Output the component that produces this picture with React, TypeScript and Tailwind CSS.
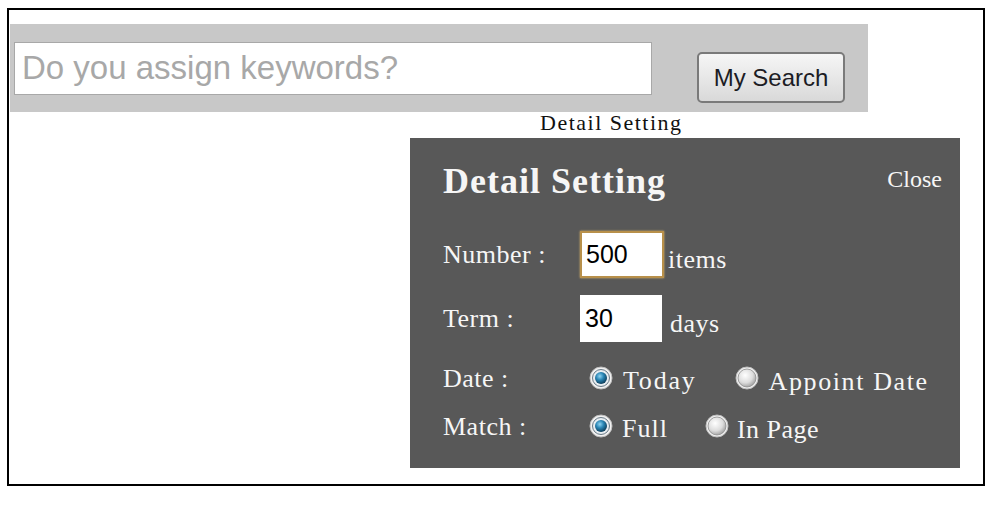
import React from "react";

function Radio({ checked }: { checked: boolean }) {
  return (
    <svg width="24" height="24" viewBox="0 0 24 24" className="shrink-0">
      <defs>
        <radialGradient id="rOff" cx="40%" cy="35%" r="70%">
          <stop offset="0%" stopColor="#ffffff" />
          <stop offset="60%" stopColor="#dcdcdc" />
          <stop offset="100%" stopColor="#9a9a9a" />
        </radialGradient>
        <radialGradient id="rOn" cx="40%" cy="35%" r="70%">
          <stop offset="0%" stopColor="#8fd3f0" />
          <stop offset="45%" stopColor="#2a86b5" />
          <stop offset="100%" stopColor="#0a3550" />
        </radialGradient>
      </defs>
      <circle cx="12" cy="12" r="11" fill="#f2f2f2" stroke="#bdbdbd" strokeWidth="1" />
      {checked ? (
        <>
          <circle cx="12" cy="12" r="8.5" fill="#e8eef2" stroke="#6a7a86" strokeWidth="1" />
          <circle cx="12" cy="12" r="6" fill="url(#rOn)" />
        </>
      ) : (
        <circle cx="12" cy="12" r="9" fill="url(#rOff)" stroke="#8a8a8a" strokeWidth="0.8" />
      )}
    </svg>
  );
}

export default function App() {
  const serif = { fontFamily: '"Liberation Serif", "Times New Roman", serif' };
  const sans = { fontFamily: '"Liberation Sans", Arial, sans-serif' };
  return (
    <div className="w-[1000px] h-[512px] bg-white overflow-hidden pt-[8px] pl-[7px]">
      <div className="w-[978px] h-[478px] border-2 border-black flex flex-col">
        {/* search bar */}
        <div className="mt-[14px] ml-[1px] w-[858px] h-[88px] bg-[#c8c8c8] flex items-center">
          <div
            className="ml-[4px] w-[638px] h-[53px] bg-white border border-[#a8a8a8] flex items-center pl-[7px] text-[33px] text-[#a8a8a8]"
            style={sans}
          >
            Do you assign keywords?
          </div>
          <button
            className="ml-[45px] mt-[19px] w-[148px] h-[51px] rounded-[5px] border-2 border-[#7a7a7a] bg-gradient-to-b from-[#f6f6f6] to-[#d9d9d9] text-[24px] text-[#1c1c24] flex items-center justify-center"
            style={sans}
          >
            My Search
          </button>
        </div>
        <div
          className="ml-[531px] h-[22px] leading-[22px] text-[22px] tracking-[1.5px] text-[#111]"
          style={serif}
        >
          Detail Setting
        </div>
        {/* panel */}
        <div className="ml-[401px] mt-[4px] w-[550px] h-[330px] bg-[#585858] text-[#f6f6f6] pl-[33px] pr-[18px] pt-[23px]" style={serif}>
          <div className="flex items-start justify-between">
            <div className="text-[36px] font-bold leading-[41px] tracking-[1px]">Detail Setting</div>
            <div className="text-[24px] leading-[28px] mt-[4px]">Close</div>
          </div>
          <div className="mt-[29px] flex flex-col">
            {/* Number */}
            <div className="flex items-center h-[47px]">
              <div className="w-[137px] text-[26px] tracking-[0.5px]">Number :</div>
              <div
                className="w-[84px] h-[47px] bg-white border-2 border-[#b8904a] shadow-[0_0_2px_#d6b06a] flex items-center pl-[4px] text-[25px] text-black"
                style={sans}
              >
                500
              </div>
              <div className="ml-[4px] mt-[10px] text-[26px] tracking-[0.5px]">items</div>
            </div>
            {/* Term */}
            <div className="flex items-center h-[47px] mt-[17px]">
              <div className="w-[137px] text-[26px] tracking-[0.5px]">Term :</div>
              <div
                className="w-[82px] h-[47px] bg-white flex items-center pl-[5px] text-[25px] text-black"
                style={sans}
              >
                30
              </div>
              <div className="ml-[8px] mt-[10px] text-[26px] tracking-[0.5px]">days</div>
            </div>
            {/* Date */}
            <div className="flex items-center h-[30px] mt-[21px]">
              <div className="w-[146px] text-[26px] tracking-[0.5px]">Date :</div>
              <Radio checked />
              <div className="ml-[10px] mt-[4px] text-[26px] tracking-[1.8px]">Today</div>
              <div className="ml-[38px]">
                <Radio checked={false} />
              </div>
              <div className="ml-[10px] mt-[6px] text-[26px] tracking-[1.6px]">Appoint Date</div>
            </div>
            {/* Match */}
            <div className="flex items-center h-[30px] mt-[18px]">
              <div className="w-[146px] text-[26px] tracking-[0.5px]">Match :</div>
              <Radio checked />
              <div className="ml-[9px] mt-[4px] text-[26px] tracking-[1px]">Full</div>
              <div className="ml-[37px]">
                <Radio checked={false} />
              </div>
              <div className="ml-[8px] mt-[6px] text-[26px] tracking-[0.5px]">In Page</div>
            </div>
          </div>
        </div>
      </div>
    </div>
  );
}
